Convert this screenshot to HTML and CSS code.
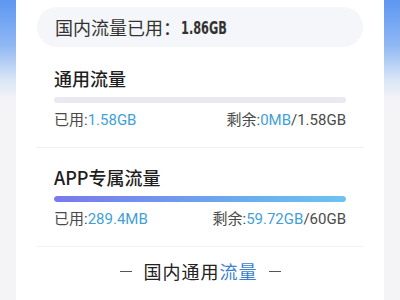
FILE: index.html
```html
<!DOCTYPE html>
<html>
<head>
<meta charset="utf-8">
<link rel="stylesheet" href="styles.css">
</head>
<body>
<div class="card">
  <div class="pill"><span class="pill-label">国内流量已用：</span><span class="pill-num">1.86GB</span></div>
  <div class="section first">
    <div class="title">通用流量</div>
    <div class="bar"><div class="fill empty"></div></div>
    <div class="row"><span>已用:<em>1.58GB</em></span><span>剩余:<em>0MB</em>/1.58GB</span></div>
  </div>
  <div class="section">
    <div class="title">APP专属流量</div>
    <div class="bar"><div class="fill grad"></div></div>
    <div class="row"><span>已用:<em>289.4MB</em></span><span>剩余:<em>59.72GB</em>/60GB</span></div>
  </div>
  <div class="footer"><span class="dash"></span><span class="ftext">国内通用<b>流量</b></span><span class="dash"></span></div>
</div>
</body>
</html>
```
FILE: styles.css
```css
html, body { margin: 0; padding: 0; }
body {
  width: 400px; height: 300px; overflow: hidden;
  background: linear-gradient(180deg, #5d97f2 0px, #8fb7f3 45px, #d9e6f6 80px, #f4f4f6 100px, #f4f4f6 100%);
  font-family: "Noto Sans CJK SC", "Noto Sans", sans-serif;
  color: #222;
}
.card {
  margin: 0 16px;
  height: 300px;
  background: #fff;
  padding-top: 7px;
  box-sizing: border-box;
}
.pill {
  margin: 0 21px;
  height: 40px;
  border-radius: 20px;
  background: #f5f6f9;
  display: flex;
  align-items: center;
  padding-left: 18px;
  font-size: 18px;
  color: #333;
}
.pill-num {
  display: inline-block;
  font-family: "DejaVu Sans Condensed", "DejaVu Sans", sans-serif;
  font-weight: bold;
  font-size: 18px;
  color: #333;
  transform: scaleX(0.7);
  transform-origin: left center;
}
.section {
  margin: 0 20px;
  padding: 0 18px 17px;
  border-bottom: 1px solid #f1f1f3;
}
.section.first { padding-top: 19px; }
.section + .section { padding-top: 17px; }
.title {
  font-size: 18px;
  line-height: 24px;
  font-weight: 500;
  color: #1e1e1e;
}
.bar {
  margin-top: 7px;
  height: 6px;
  border-radius: 3px;
  background: #e9e9f0;
  overflow: hidden;
}
.fill { height: 100%; border-radius: 3px; }
.fill.empty { width: 0; }
.fill.grad { width: 100%; background: linear-gradient(90deg, #7a78ee, #6ab0ef 70%, #6cc3f1); }
.row {
  margin-top: 7px;
  display: flex;
  justify-content: space-between;
  font-family: Roboto, "Noto Sans CJK SC", sans-serif;
  font-size: 15px;
  line-height: 20px;
  color: #4a4a4a;
}
.row em { font-style: normal; color: #3f9fd6; }
.footer {
  display: flex;
  align-items: center;
  justify-content: center;
  gap: 12px;
  font-size: 18px;
  line-height: 24px;
  margin-top: 12px;
  color: #222;
}
.ftext { letter-spacing: 1px; margin-right: -1px; }
.dash { width: 12px; height: 1px; background: #555; }
.footer b { font-weight: normal; color: #3b7fd1; }
```
